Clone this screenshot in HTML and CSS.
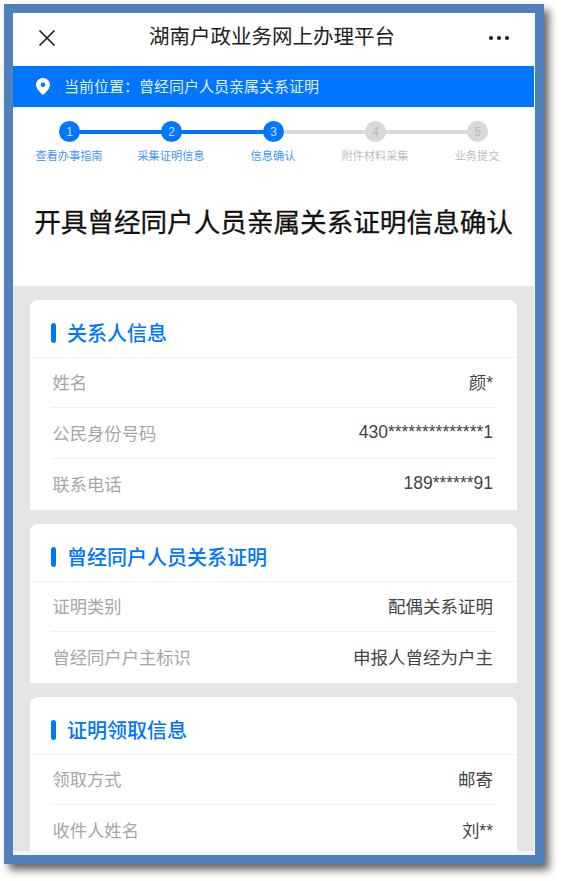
FILE: index.html
```html
<!DOCTYPE html>
<html lang="zh-CN">
<head>
<meta charset="utf-8">
<title>湖南户政业务网上办理平台</title>
<link rel="stylesheet" href="styles.css">
</head>
<body>
<div class="frame">
  <div class="screen">
    <div class="viewport">
      <header class="nav">
        <svg class="nav-close" viewBox="0 0 18 18" width="18" height="18"><path d="M1.5 1.5L16.500 16.500M16.500 1.500L1.500 16.500" fill="none" stroke="#222" stroke-width="1.700"/></svg>
        <h1 class="nav-title">湖南户政业务网上办理平台</h1>
        <svg class="nav-more" viewBox="0 0 22 6" width="22" height="6"><circle cx="3" cy="3" r="2.100" fill="#222"/><circle cx="11" cy="3" r="2.100" fill="#222"/><circle cx="19" cy="3" r="2.100" fill="#222"/></svg>
      </header>
      <div class="location">
        <svg class="pin" viewBox="0 0 14 17" width="14" height="17"><path fill-rule="evenodd" fill="#fff" d="M7 0C3.100 0 0 3 0 6.800C0 11 4.500 14.800 7 17C9.500 14.800 14 11 14 6.800C14 3 10.900 0 7 0ZM7 4.500A2.300 2.300 0 1 1 7 9.100A2.300 2.300 0 1 1 7 4.500Z"/></svg>
        <span>当前位置：曾经同户人员亲属关系证明</span>
      </div>
      <ol class="steps">
        <li class="step done"><span class="dot">1</span><span class="step-label">查看办事指南</span></li>
        <li class="step done"><span class="dot">2</span><span class="step-label">采集证明信息</span></li>
        <li class="step current"><span class="dot">3</span><span class="step-label">信息确认</span></li>
        <li class="step todo"><span class="dot">4</span><span class="step-label">附件材料采集</span></li>
        <li class="step todo last"><span class="dot">5</span><span class="step-label">业务提交</span></li>
      </ol>
      <h2 class="page-title">开具曾经同户人员亲属关系证明信息确认</h2>
      <main class="content">
        <section class="card">
          <h3 class="card-title">关系人信息</h3>
          <div class="row"><span class="key">姓名</span><span class="val">颜*</span></div>
          <div class="row"><span class="key">公民身份号码</span><span class="val">430**************1</span></div>
          <div class="row"><span class="key">联系电话</span><span class="val">189******91</span></div>
        </section>
        <section class="card">
          <h3 class="card-title">曾经同户人员关系证明</h3>
          <div class="row"><span class="key">证明类别</span><span class="val">配偶关系证明</span></div>
          <div class="row"><span class="key">曾经同户户主标识</span><span class="val">申报人曾经为户主</span></div>
        </section>
        <section class="card">
          <h3 class="card-title">证明领取信息</h3>
          <div class="row"><span class="key">领取方式</span><span class="val">邮寄</span></div>
          <div class="row"><span class="key">收件人姓名</span><span class="val">刘**</span></div>
        </section>
      </main>
    </div>
    <div class="bottom-strip"></div>
  </div>
</div>
</body>
</html>
```
FILE: styles.css
```css
* { box-sizing: border-box; margin: 0; padding: 0; }
html, body { background: #fff; }
body {
  width: 562px;
  height: 881px;
  overflow: hidden;
  font-family: "Liberation Sans", "Noto Sans CJK SC", sans-serif;
}
.frame {
  margin: 4px 0 0 4px;
  width: 540px;
  height: 860px;
  padding: 9px;
  background: #4f81bd;
  box-shadow: 5px 6px 8px rgba(0, 0, 0, 0.6);
}
.screen {
  height: 842px;
  background: #fff;
  padding-right: 1px;
  display: flex;
  flex-direction: column;
}
.viewport {
  height: 838px;
  overflow: hidden;
  flex: none;
}
.bottom-strip {
  height: 4px;
  background: #f5f5f5;
  flex: none;
}
.nav {
  height: 53px;
  display: flex;
  align-items: center;
  justify-content: space-between;
  padding: 0 24px 3px 25px;
  background: #fff;
}
.nav-title {
  font-size: 20.500px;
  font-weight: 400;
  color: #222;
  line-height: 26px;
  margin-bottom: 2px;
}
.location {
  height: 41px;
  background: #0076ff;
  color: #fff;
  display: flex;
  align-items: center;
  gap: 14px;
  padding-left: 23px;
  font-size: 15px;
}
.location span { opacity: 0.88; margin-bottom: 2px; }
.steps {
  list-style: none;
  display: grid;
  grid-template-columns: repeat(5, 102px);
  padding: 14px 0 0 5.500px;
  height: 76px;
}
.step {
  position: relative;
  display: flex;
  flex-direction: column;
  align-items: center;
  font-size: 11.200px;
}
.dot {
  position: relative;
  z-index: 1;
  width: 21px;
  height: 21px;
  border-radius: 50%;
  display: flex;
  align-items: center;
  justify-content: center;
  font-size: 12px;
  color: #cfe4ff;
  background: #0076ff;
}
.step::after {
  content: "";
  position: absolute;
  left: 50%;
  width: 102px;
  top: 9px;
  height: 3.500px;
  background: #0076ff;
}
.step.current::after, .step.todo::after { background: #dcdcdc; }
.step.last::after { display: none; }
.step.todo .dot { background: #d9d9d9; color: #bdbdbd; }
.step-label {
  margin: 6px 1px 0 0;
  line-height: 16px;
  color: #3f95ff;
  white-space: nowrap;
}
.step.todo .step-label { color: #bdbdbd; }
.page-title {
  height: 103px;
  padding-top: 20px;
  font-size: 26.600px;
  line-height: 40px;
  font-weight: 400;
  -webkit-text-stroke: 0.3px #111;
  color: #111;
  text-align: center;
  white-space: nowrap;
}
.content {
  background: #e5e5e5;
  padding: 14px 17px 0 17px;
  display: flex;
  flex-direction: column;
  gap: 14px;
}
.card {
  background: #fff;
  border-radius: 8px 8px 0 0;
}
.card-title {
  position: relative;
  height: 58px;
  display: flex;
  align-items: center;
  padding: 7px 0 0 37px;
  border-bottom: 1px solid #f2f2f2;
  font-size: 20px;
  font-weight: 500;
  color: #0076ff;
}
.card-title::before {
  content: "";
  position: absolute;
  left: 21px;
  top: 23px;
  width: 4.500px;
  height: 20px;
  border-radius: 2.500px;
  background: #0076ff;
}
.row {
  height: 51px;
  margin: 0 21px 0 20.500px;
  padding: 0 3px 2px 2px;
  display: flex;
  align-items: center;
  justify-content: space-between;
  font-size: 17.300px;
  border-top: 1px solid #f2f2f2;
}
.card-title + .row { height: 49px; border-top: 0; }
.row:last-child { height: 52px; }
.key { color: #a6a6a6; }
.val { color: #444; font-size: 17.500px; }
```
